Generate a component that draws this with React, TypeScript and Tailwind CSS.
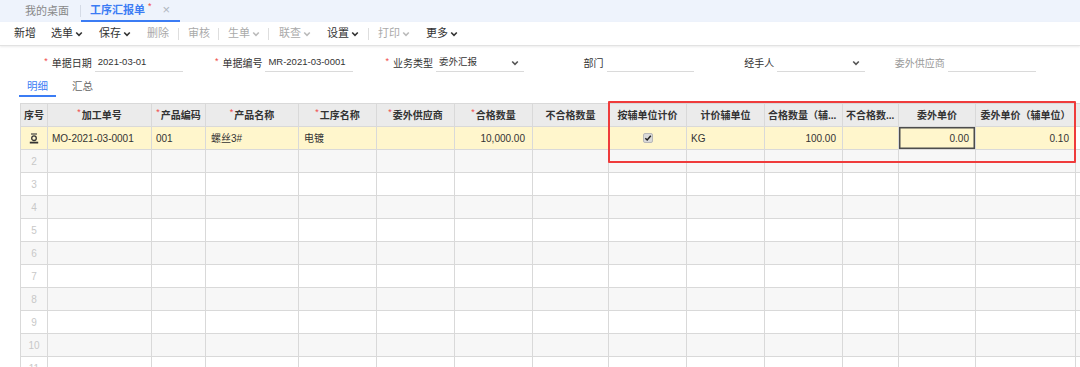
import React from "react";

const Chev = ({ color = "#333" }: { color?: string }) => (
  <svg width="8" height="6" viewBox="0 0 8 6" className="ml-[2px] shrink-0">
    <path d="M1.2 1.5 L4 4.3 L6.8 1.5" fill="none" stroke={color} strokeWidth="1.6" />
  </svg>
);

type TItem =
  | { kind: "btn"; t: string; ml: string; dis?: boolean; chev?: boolean }
  | { kind: "sep"; ml: string };

const toolbar: TItem[] = [
  { kind: "btn", t: "新增", ml: "ml-[14px]" },
  { kind: "btn", t: "选单", ml: "ml-[15px]", chev: true },
  { kind: "btn", t: "保存", ml: "ml-[16px]", chev: true },
  { kind: "btn", t: "删除", ml: "ml-[16px]", dis: true },
  { kind: "sep", ml: "ml-[9px]" },
  { kind: "btn", t: "审核", ml: "ml-[9px]", dis: true },
  { kind: "sep", ml: "ml-[8px]" },
  { kind: "btn", t: "生单", ml: "ml-[9px]", dis: true, chev: true },
  { kind: "sep", ml: "ml-[8px]" },
  { kind: "btn", t: "联查", ml: "ml-[10px]", dis: true, chev: true },
  { kind: "btn", t: "设置", ml: "ml-[16px]", chev: true },
  { kind: "sep", ml: "ml-[9px]" },
  { kind: "btn", t: "打印", ml: "ml-[9px]", dis: true, chev: true },
  { kind: "btn", t: "更多", ml: "ml-[16px]", chev: true },
];

const fields = [
  { star: true, label: "单据日期", value: "2021-03-01" },
  { star: true, label: "单据编号", value: "MR-2021-03-0001" },
  { star: true, label: "业务类型", value: "委外汇报", select: true },
  { star: false, label: "部门", value: "" },
  { star: false, label: "经手人", value: "", select: true },
  { star: false, label: "委外供应商", value: "", gray: true },
];

type Col = { w: string; h: string; star?: boolean; left?: boolean };
const cols: Col[] = [
  { w: "w-[27px]", h: "序号" },
  { w: "w-[104px]", h: "加工单号", star: true },
  { w: "w-[54px]", h: "产品编码", star: true },
  { w: "w-[93px]", h: "产品名称", star: true },
  { w: "w-[78px]", h: "工序名称", star: true },
  { w: "w-[78px]", h: "委外供应商", star: true },
  { w: "w-[78px]", h: "合格数量", star: true },
  { w: "w-[76px]", h: "不合格数量" },
  { w: "w-[78px]", h: "按辅单位计价" },
  { w: "w-[78px]", h: "计价辅单位" },
  { w: "w-[78px]", h: "合格数量（辅...", left: true },
  { w: "w-[56px]", h: "不合格数...", left: true },
  { w: "w-[77px]", h: "委外单价" },
  { w: "w-[100px]", h: "委外单价（辅单位）" },
  { w: "w-[100px]", h: "" },
];

const RowIcon = () => (
  <svg width="10" height="11" viewBox="0 0 10 11">
    <line x1="2" y1="1" x2="8" y2="1" stroke="#333" strokeWidth="1.1" />
    <circle cx="5" cy="5.2" r="2.3" fill="none" stroke="#333" strokeWidth="1.3" />
    <line x1="0.8" y1="9.6" x2="9.2" y2="9.6" stroke="#333" strokeWidth="1.8" />
  </svg>
);

const Checkbox = () => (
  <div className="w-[10px] h-[10px] rounded-[2px] bg-[#d9d9d9] border border-[#b8b8b8] flex items-center justify-center">
    <svg width="8" height="8" viewBox="0 0 8 8">
      <path d="M1.3 4.2 L3.2 6 L6.8 1.8" fill="none" stroke="#222" strokeWidth="1.5" />
    </svg>
  </div>
);

const cellBase =
  "shrink-0 h-[23px] border-r border-b border-[#d9d9d9] flex items-center text-[10px] text-[#333] whitespace-nowrap overflow-hidden";

export default function App() {
  const row1: React.ReactNode[] = [
    <div className="w-full flex justify-center"><RowIcon /></div>,
    <span className="pl-[4px]">MO-2021-03-0001</span>,
    <span className="pl-[4px]">001</span>,
    <span className="pl-[5px]">螺丝3#</span>,
    <span className="pl-[5px]">电镀</span>,
    null,
    <span className="w-full text-right pr-[7px]">10,000.00</span>,
    null,
    <div className="w-full flex justify-center"><Checkbox /></div>,
    <span className="pl-[4px]">KG</span>,
    <span className="w-full text-right pr-[6px]">100.00</span>,
    null,
    <span className="w-full text-right pr-[6px]">0.00</span>,
    <span className="w-full text-right pr-[6px]">0.10</span>,
    null,
  ];

  return (
    <div className='w-[1080px] h-[367px] overflow-hidden bg-white font-["Liberation_Sans","Noto_Sans_CJK_SC",sans-serif] text-[#333]'>
      {/* top tabs */}
      <div className="h-[22px] bg-[#eef3fc] flex items-stretch">
        <div className="ml-[25px] flex items-center text-[11px] text-[#888]">我的桌面</div>
        <div className="ml-[11px] self-center w-px h-[12px] bg-[#d5dbe6]" />
        <div className="ml-0 w-[99px] border-b-2 border-[#3b7cf4] flex items-center pl-[9px] text-[11px] font-bold text-[#3b7cf4]">
          <span>工序汇报单</span>
          <span className="ml-[3px] -mt-[6px] text-[9px] text-[#f04848] font-normal">*</span>
          <span className="ml-[11px] text-[13px] font-normal text-[#b0b6c0]">×</span>
        </div>
      </div>

      {/* toolbar */}
      <div className="h-[24px] bg-white flex items-center border-b border-[#e2e2e2] shadow-[0_1px_2px_rgba(0,0,0,0.08)]">
        {toolbar.map((it, i) =>
          it.kind === "sep" ? (
            <div key={i} className={`${it.ml} w-px h-[12px] bg-[#dedede]`} />
          ) : (
            <div
              key={i}
              className={`${it.ml} flex items-center text-[11px] ${it.dis ? "text-[#aaa]" : "text-[#333]"}`}
            >
              <span>{it.t}</span>
              {it.chev && <Chev color={it.dis ? "#bbb" : "#333"} />}
            </div>
          )
        )}
      </div>

      {/* form */}
      <div className="mt-[8px] pl-[12px] flex">
        {fields.map((f, i) => (
          <div key={i} className="w-[170.6px] shrink-0 flex items-center h-[18px]">
            <div className="w-[80px] flex justify-end items-center text-[10px]">
              {f.star && <span className="text-[#f04848] text-[9px] mr-[4px] -mt-[3px]">*</span>}
              <span className={f.gray ? "text-[#999]" : "text-[#333]"}>{f.label}</span>
            </div>
            <div className="ml-[3px] w-[88px] h-[18px] border-b border-[#dadada] flex items-center justify-between pl-[3px] pr-[5px] text-[9.5px] text-[#333]">
              <span>{f.value}</span>
              {f.select && <Chev color="#555" />}
            </div>
          </div>
        ))}
      </div>

      {/* detail tabs */}
      <div className="ml-[19px] flex">
        <div className="h-[25px] px-[8px] pt-[8px] border-b-2 border-[#3b7cf4] text-[10.5px] leading-[12px] text-[#3b7cf4]">明细</div>
        <div className="ml-[8px] h-[25px] px-[8px] pt-[8px] text-[10.5px] leading-[12px] text-[#666]">汇总</div>
      </div>

      {/* table */}
      <div className="mt-[6px] ml-[20px] relative border-l border-t border-[#d9d9d9]">
        <div className="flex bg-[#ebebeb]">
          {cols.map((c, i) => (
            <div
              key={i}
              className={`${cellBase} ${c.w} font-bold ${c.left ? "justify-start pl-[3px]" : "justify-center"}`}
            >
              {c.star && <span className="text-[#f04848] font-normal text-[9px] mr-[1px] -mt-[4px]">*</span>}
              <span>{c.h}</span>
            </div>
          ))}
        </div>
        <div className="flex bg-[#fff6cc]">
          {cols.map((c, i) => (
            <div
              key={i}
              className={`${cellBase} ${c.w} ${i === 12 ? "shadow-[inset_0_0_0_1.5px_#4d4d4d]" : ""} ${i === 14 ? "bg-white" : ""}`}
            >
              {row1[i]}
            </div>
          ))}
        </div>
        {[2, 3, 4, 5, 6, 7, 8, 9, 10, 11].map((n) => (
          <div key={n} className={`flex ${n % 2 === 0 ? "bg-[#f7f7f7]" : "bg-white"}`}>
            {cols.map((c, i) => (
              <div key={i} className={`${cellBase} ${c.w} ${i === 0 ? "justify-center text-[#c8c8c8]" : ""}`}>
                {i === 0 ? n : null}
              </div>
            ))}
          </div>
        ))}
        <div className="absolute left-[587px] top-[-3px] w-[468px] h-[62px] border-2 border-[#ef3b3b] rounded-[1px] pointer-events-none" />
      </div>
    </div>
  );
}
